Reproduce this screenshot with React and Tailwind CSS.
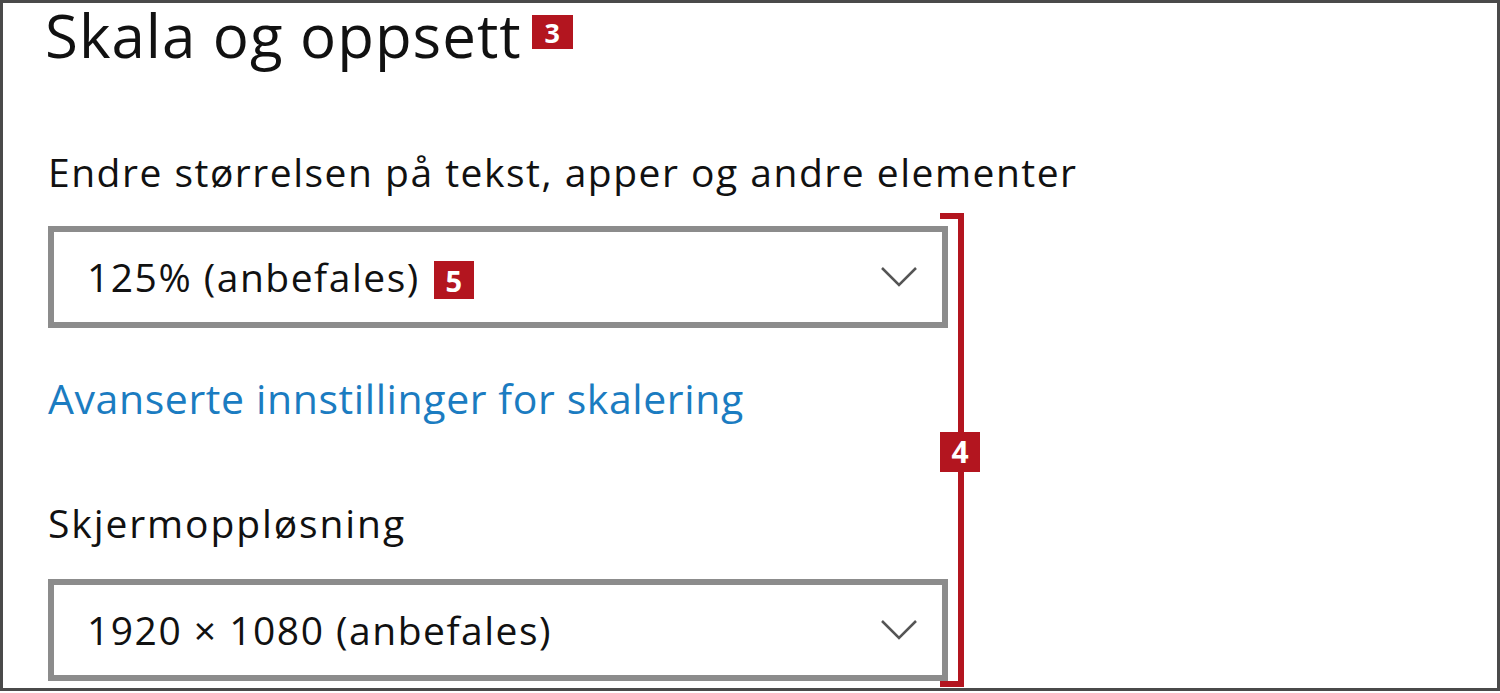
import React from 'react';

const font = { fontFamily: '"Open Sans", "Noto Sans", sans-serif' };

function Badge({ children, className = '' }) {
    return (
        <span className={`inline-flex items-center justify-center bg-[#b3151f] text-white font-bold leading-none tracking-normal ${className}`}>
            {children}
        </span>
    );
}

function Chevron() {
    return (
        <svg width="38" height="22" viewBox="0 0 38 22" fill="none">
            <path d="M2 2 L19 19 L36 2" stroke="#555" strokeWidth="2.5" />
        </svg>
    );
}

function Dropdown({ children }) {
    return (
        <div className="w-[900px] h-[102px] border-[6px] border-[#8c8c8c] bg-white flex items-center justify-between pl-[33px] pr-[24px]">
            <div className="flex items-center gap-[14px] text-[39px] text-[#111] tracking-[1.5px]">{children}</div>
            <Chevron />
        </div>
    );
}

export default function App() {
    return (
        <div className="w-[1500px] h-[693px] bg-white" style={font}>
            <div className="relative w-[1500px] h-[691px] border-[3px] border-[#4a4a4a]">
                <div className="pl-[42px] flex items-center gap-[10px]">
                    <span className="text-[60px] leading-[64px] text-[#111] tracking-[1px]">Skala og oppsett</span>
                    <Badge className="w-[41px] h-[34px] text-[27px] -mt-[6px]">3</Badge>
                </div>

                <div className="pl-[45px] pt-[83px] flex flex-col">
                    <div className="text-[39px] leading-[44px] text-[#111] tracking-[1.5px]">
                        Endre størrelsen på tekst, apper og andre elementer
                    </div>
                    <div className="mt-[32px]">
                        <Dropdown>
                            <span>125% (anbefales)</span>
                            <Badge className="w-[40px] h-[38px] text-[29px] mt-[6px]">5</Badge>
                        </Dropdown>
                    </div>
                    <div className="mt-[45px] text-[41px] leading-[50px] text-[#1b7cc1] tracking-[0.6px]">
                        Avanserte innstillinger for skalering
                    </div>
                    <div className="mt-[78px] text-[39px] leading-[44px] text-[#111] tracking-[1.9px]">
                        Skjermoppløsning
                    </div>
                    <div className="mt-[34px]">
                        <Dropdown>
                            <span>1920 × 1080 (anbefales)</span>
                        </Dropdown>
                    </div>
                </div>

                {/* annotation bracket */}
                <div className="absolute left-[937px] top-[210px] w-[24px] h-[474px] border-t-[6px] border-r-[6px] border-b-[6px] border-[#b3151f]" />
                <Badge className="absolute left-[937px] top-[429px] w-[40px] h-[40px] text-[30px]">4</Badge>
            </div>
        </div>
    );
}
